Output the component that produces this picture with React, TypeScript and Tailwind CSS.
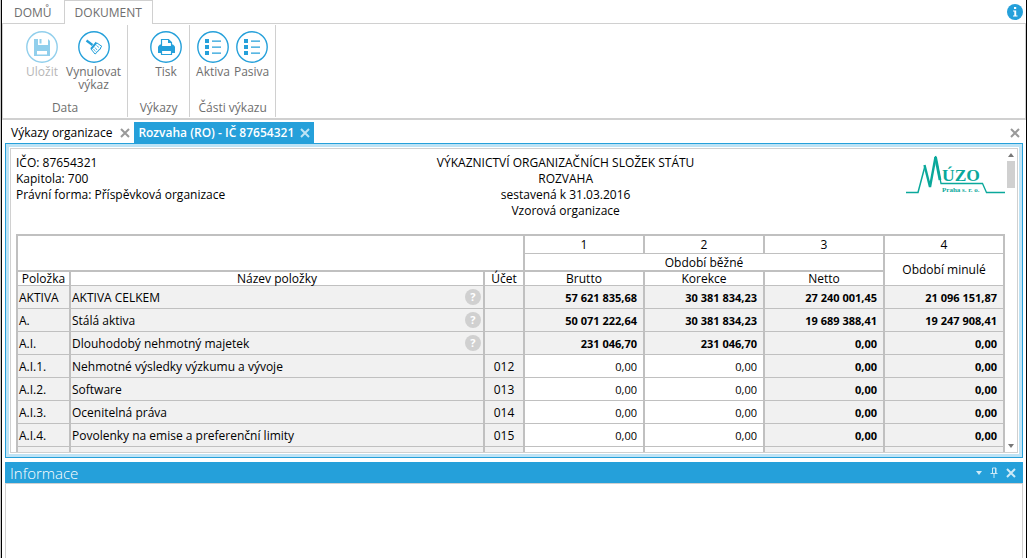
import { useState } from "react";
import type { ReactNode } from "react";
import clsx from "clsx";

type Row = {
  code: string;
  name: string;
  account?: string;
  values: string[];
  total?: boolean;
};

const rows: Row[] = [
  {
    code: "AKTIVA",
    name: "AKTIVA CELKEM",
    values: ["57 621 835,68", "30 381 834,23", "27 240 001,45", "21 096 151,87"],
    total: true,
  },
  {
    code: "A.",
    name: "Stálá aktiva",
    values: ["50 071 222,64", "30 381 834,23", "19 689 388,41", "19 247 908,41"],
    total: true,
  },
  {
    code: "A.I.",
    name: "Dlouhodobý nehmotný majetek",
    values: ["231 046,70", "231 046,70", "0,00", "0,00"],
    total: true,
  },
  {
    code: "A.I.1.",
    name: "Nehmotné výsledky výzkumu a vývoje",
    account: "012",
    values: ["0,00", "0,00", "0,00", "0,00"],
  },
  {
    code: "A.I.2.",
    name: "Software",
    account: "013",
    values: ["0,00", "0,00", "0,00", "0,00"],
  },
  {
    code: "A.I.3.",
    name: "Ocenitelná práva",
    account: "014",
    values: ["0,00", "0,00", "0,00", "0,00"],
  },
  {
    code: "A.I.4.",
    name: "Povolenky na emise a preferenční limity",
    account: "015",
    values: ["0,00", "0,00", "0,00", "0,00"],
  },
];

const columns = ["Brutto", "Korekce", "Netto", "Období minulé"];

function SaveIcon() {
  return (
    <svg viewBox="0 0 32 32" className="w-8 h-8" fill="#25a0da">
      <circle cx="16" cy="16" r="15.2" fill="none" stroke="#25a0da" strokeWidth="1.4" />
      <path d="M8 8h4v6h10V8l2 2v15H8z" />
      <path d="M13.500 8h2v4.500h-2z" />
      <path d="M11 20h10v3.500H11z" fill="#fff" />
    </svg>
  );
}

function BroomIcon() {
  return (
    <svg viewBox="0 0 32 32" className="w-8 h-8" fill="none" stroke="#25a0da">
      <circle cx="16" cy="16" r="15.2" strokeWidth="1.4" />
      <path d="M8.500 9.500l6 4.500" strokeWidth="2.200" />
      <path d="M18.500 11.500l-5.500 6.500" strokeWidth="2" />
      <path d="M19 12l5 3.500-1.500 1 0 1.500-1.500.5-.5 1.500-1.500.5-.5 1.500-1.500 1-4-5" strokeWidth="1" />
      <path d="M18.500 14.500l2.500 2M17 16.500l2 2.500M15.500 18l2 2.500" strokeWidth="0.8" />
    </svg>
  );
}

function PrintIcon() {
  return (
    <svg viewBox="0 0 32 32" className="w-8 h-8" fill="#25a0da">
      <circle cx="16" cy="16" r="15.2" fill="none" stroke="#25a0da" strokeWidth="1.4" />
      <path d="M10 13.500h13l2 2V22H8v-6.500z" />
      <path d="M11.500 15.500v-7h7l3 3v4z" fill="#fff" stroke="#25a0da" strokeWidth="1.200" />
      <path d="M18 8v4h4z" />
      <path d="M11.500 19.500h10v4h-10z" fill="#fff" stroke="#25a0da" strokeWidth="1.200" />
    </svg>
  );
}

function ListIcon() {
  return (
    <svg viewBox="0 0 32 32" className="w-8 h-8" fill="#25a0da">
      <circle cx="16" cy="16" r="15.2" fill="none" stroke="#25a0da" strokeWidth="1.4" />
      <path d="M8 8h4v4H8zM8 14h4v4H8zM8 20h4v4H8z" />
      <path d="M15 9.500h9v1.200h-9zM15 15.500h9v1.200h-9zM15 21.500h9v1.200h-9z" />
    </svg>
  );
}

function CloseIcon({ className }: { className?: string }) {
  return (
    <svg viewBox="0 0 10 10" className={clsx("w-2.5 h-2.5", className)}>
      <path d="M1 1l8 8M9 1l-8 8" stroke="currentColor" strokeWidth="2" />
    </svg>
  );
}

function Logo() {
  return (
    <svg viewBox="0 0 99 40" className="w-[99px] h-10 shrink-0" role="img" aria-label="MÚZO Praha s. r. o.">
      <g fill="none" stroke="#0aa89b">
        <path d="M0 37.500H12L19 11" strokeWidth="1.500" />
        <path d="M18.500 10l5.500 22L29.500 2" strokeWidth="2.400" />
        <path d="M29.500 1l5.500 27.500H76.500l4 9H99" strokeWidth="1.300" />
        <path d="M29.500 2l4.500 23" strokeWidth="2.800" />
      </g>
      <g fill="#0aa89b" className="font-['Liberation_Serif'] font-bold">
        <text x="36" y="25.500" fontSize="17.500">ÚZO</text>
        <text x="36" y="36.500" fontSize="7">Praha s. r. o.</text>
      </g>
    </svg>
  );
}

function RibbonButton(props: { label: string; icon: ReactNode; disabled?: boolean }) {
  return (
    <button
      disabled={props.disabled}
      className="flex flex-col items-center gap-0.5 leading-[13px] disabled:opacity-50"
    >
      {props.icon}
      <span className="whitespace-pre-line">{props.label}</span>
    </button>
  );
}

function RibbonGroup(props: { label: string; className: string; children: ReactNode }) {
  return (
    <section className="flex flex-col justify-between border-r border-[#d0d0d0] pt-1.5 pb-px">
      <div className={clsx("flex items-start", props.className)}>{props.children}</div>
      <h2 className="text-center leading-4">{props.label}</h2>
    </section>
  );
}

export default function App() {
  const [ribbonTab, setRibbonTab] = useState("DOKUMENT");

  return (
    <div className="h-screen min-h-[400px] bg-white border-l border-[#c8c8c8] font-['Open_Sans',sans-serif] text-[12px] text-black">
      <div className="flex flex-col h-full border-x border-black">
        {/* Ribbon tabs */}
        <nav className="flex h-6 shrink-0 border-b border-[#d0d0d0] text-[#6e6e6e]">
          {["DOMŮ", "DOKUMENT"].map((tab) => (
            <button
              key={tab}
              onClick={() => setRibbonTab(tab)}
              className={clsx(
                "h-6 pt-px border-[#d0d0d0]",
                tab == ribbonTab
                  ? "px-2.5 bg-white border-x border-t"
                  : "px-3"
              )}
            >
              {tab}
            </button>
          ))}
          <button aria-label="Nápověda" className="ml-auto mr-[3px]">
            <svg viewBox="0 0 16 16" className="w-4 h-4">
              <circle cx="8" cy="8" r="8" fill="#25a0da" />
              <path d="M7 3h2.200v2H7zM6 6.500h3.200v5h1.300v1H6v-1h1.300v-4H6z" fill="#fff" />
            </svg>
          </button>
        </nav>

        {/* Ribbon */}
        <div className="flex h-24 shrink-0 border-x border-b-2 border-[#d0d0d0] py-px text-[#6e6e6e]">
          <RibbonGroup label="Data" className="gap-2 pl-[23px] pr-1.5">
            <RibbonButton label="Uložit" icon={<SaveIcon />} disabled />
            <RibbonButton label={"Vynulovat\nvýkaz"} icon={<BroomIcon />} />
          </RibbonGroup>
          <RibbonGroup label="Výkazy" className="pl-[22px] pr-[7px]">
            <RibbonButton label="Tisk" icon={<PrintIcon />} />
          </RibbonGroup>
          <RibbonGroup label="Části výkazu" className="gap-1 px-1.5">
            <RibbonButton label="Aktiva" icon={<ListIcon />} />
            <RibbonButton label="Pasiva" icon={<ListIcon />} />
          </RibbonGroup>
        </div>

        {/* Document tabs */}
        <div className="flex items-stretch h-[23px] shrink-0 pt-0.5 px-[3px]">
          <div className="flex items-center gap-2 pl-1.5 pr-1 pt-px">
            <button>Výkazy organizace</button>
            <button aria-label="Zavřít Výkazy organizace" className="text-[#999]">
              <CloseIcon />
            </button>
          </div>
          <div className="flex items-center gap-1.5 px-1 pt-px bg-[#25a0da] text-white font-semibold">
            <button>Rozvaha (RO) - IČ 87654321</button>
            <button aria-label="Zavřít Rozvaha" className="text-[#bee3f5]">
              <CloseIcon />
            </button>
          </div>
          <button aria-label="Zavřít vše" className="ml-auto mr-[3px] text-[#999]">
            <CloseIcon />
          </button>
        </div>

        {/* Document */}
        <main className="flex-1 min-h-0 mx-[3px] border border-[#25a0da]">
          <div className="h-full border-[3px] border-[#bee3f5] p-px">
            <div className="flex h-full border border-[#d0d0d0]">
              <div className="flex-1 min-w-0 overflow-hidden pt-1.5 pl-[5px]">
                <header className="flex leading-4 font-medium">
                  <div>
                    <p>IČO: 87654321</p>
                    <p>Kapitola: 700</p>
                    <p>Právní forma: Příspěvková organizace</p>
                  </div>
                  <div className="flex-1 text-center">
                    <h1>VÝKAZNICTVÍ ORGANIZAČNÍCH SLOŽEK STÁTU</h1>
                    <p>ROZVAHA</p>
                    <p>sestavená k 31.03.2016</p>
                    <p>Vzorová organizace</p>
                  </div>
                  <Logo />
                </header>

                <table className="mt-[15px] w-full table-fixed border-separate border-spacing-0 border-r-2 border-[#c0c0c0] font-medium [&_td]:border-[#c0c0c0] [&_th]:border-[#c0c0c0] [&_th]:p-0 [&_th]:font-medium [&_td]:border-l-2 [&_th]:border-l-2">
                  <colgroup>
                    <col className="w-[53px]" />
                    <col />
                    <col className="w-10" />
                    <col className="w-[120px]" />
                    <col className="w-[120px]" />
                    <col className="w-[120px]" />
                    <col className="w-[120px]" />
                  </colgroup>
                  <thead className="leading-[13px]">
                    <tr className="h-[19px]">
                      <th colSpan={3} rowSpan={2} className="border-t-2" />
                      {columns.map((column, i) => (
                        <th key={column} className="border-t-2">
                          {i + 1}
                        </th>
                      ))}
                    </tr>
                    <tr className="h-[17px]">
                      <th colSpan={3} className="border-t">
                        Období běžné
                      </th>
                      <th rowSpan={2} className="border-t">
                        {columns[3]}
                      </th>
                    </tr>
                    <tr className="h-[15px]">
                      <th className="border-t-2">Položka</th>
                      <th className="border-t-2">Název položky</th>
                      <th className="border-t-2">Účet</th>
                      {columns.slice(0, 3).map((column) => (
                        <th key={column} className="border-t-2">
                          {column}
                        </th>
                      ))}
                    </tr>
                  </thead>
                  <tbody className="leading-4 bg-[#f1f1f1] [&_td]:border-t">
                    {rows.map((row) => (
                      <tr key={row.code} className="h-[23px]">
                        <td className="pt-0.5 pl-px">{row.code}</td>
                        <td className="py-0 pl-px pr-0.5">
                          <div className="flex items-center justify-between">
                            <span className="pt-0.5">{row.name}</span>
                            {row.total && (
                              <button
                                aria-label={"Nápověda " + row.name}
                                className="w-4 h-4 rounded-full bg-[#d0d0d0] text-white text-[11px] leading-4 font-bold"
                              >
                                ?
                              </button>
                            )}
                          </div>
                        </td>
                        <td className="pt-0.5 text-center">{row.account}</td>
                        {row.values.map((value, i) =>
                          !row.total && i < 2 ? (
                            <td key={i} className="bg-white">
                              <input
                                aria-label={row.name + " " + columns[i]}
                                defaultValue={value}
                                className="block w-full h-[22px] pr-1.5 text-[11px] text-right font-normal outline-none"
                              />
                            </td>
                          ) : (
                            <td key={i} className="pt-0.5 pr-1.5 text-[11px] text-right font-bold">
                              {value}
                            </td>
                          )
                        )}
                      </tr>
                    ))}
                    <tr className="h-[23px]">
                      <td />
                      <td />
                      <td />
                      <td className="bg-white" />
                      <td className="bg-white" />
                      <td />
                      <td />
                    </tr>
                  </tbody>
                </table>
              </div>

              {/* Scrollbar */}
              <div className="flex flex-col items-center w-3 shrink-0 py-1 text-[#777]">
                <svg viewBox="0 0 6 4" className="w-1.5 h-1">
                  <path d="M0 4l3-4 3 4z" fill="currentColor" />
                </svg>
                <div className="mt-1 w-2 h-[27px] bg-[#d0d0d0]" />
                <svg viewBox="0 0 6 4" className="w-1.5 h-1 mt-auto">
                  <path d="M0 0l3 4 3-4z" fill="currentColor" />
                </svg>
              </div>
            </div>
          </div>
        </main>

        {/* Info panel */}
        <aside className="flex flex-col h-[100px] shrink-0 pt-1 mx-[3px]">
          <div className="flex items-center h-[21px] bg-[#25a0da] pl-[5px] pr-[7px] text-white">
            <h2 className="text-[15px] leading-5 font-light">Informace</h2>
            <div className="flex items-center gap-2 ml-auto text-[#cdeaf7]">
              <button aria-label="Nabídka">
                <svg viewBox="0 0 6 4" className="w-1.5 h-1">
                  <path d="M0 0l3 4 3-4z" fill="currentColor" />
                </svg>
              </button>
              <button aria-label="Připnout">
                <svg viewBox="0 0 8 11" className="w-2 h-[11px]" fill="none" stroke="currentColor">
                  <path d="M2.500 6V1h3.500v5M0.500 6.500h7M4 7v4M5.500 1v5" />
                </svg>
              </button>
              <button aria-label="Zavřít">
                <CloseIcon />
              </button>
            </div>
          </div>
          <div className="flex-1 border-x border-t border-[#d0d0d0]" />
        </aside>
      </div>
    </div>
  );
}
